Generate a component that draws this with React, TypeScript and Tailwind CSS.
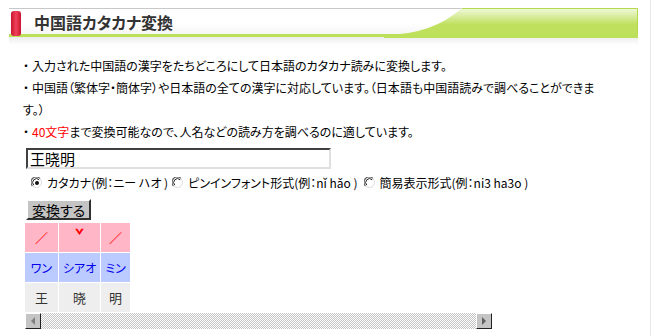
import React from "react";

const jp = "font-['Noto_Sans_CJK_JP',sans-serif] [font-feature-settings:'palt']";

const Radio = ({ checked }: { checked?: boolean }) => (
  <svg width="12" height="12" viewBox="0 0 12 12" className="shrink-0">
    <circle cx="6" cy="6" r="5.5" fill="#ffffff" />
    <path d="M1.5 9 A5 5 0 0 1 9 1.5" fill="none" stroke="#606060" strokeWidth="1.2" />
    <path d="M2.8 8.2 A3.8 3.8 0 0 1 8.2 2.8" fill="none" stroke="#202020" strokeWidth="1" />
    <path d="M9 1.5 A5 5 0 0 1 1.5 9" fill="none" stroke="#dcdcdc" strokeWidth="1" />
    {checked && <circle cx="6" cy="6" r="2" fill="#111111" />}
  </svg>
);

const Dot = () => <span className="inline-block w-[12px] text-center [font-feature-settings:normal]">・</span>;

const Header = () => (
  <div className="relative ml-[9px] w-[629px] h-[29px] border-t border-[#c8c8c8] bg-gradient-to-b from-white via-white to-[#f3f3f3]">
    <svg className="absolute right-0 top-[-1px]" width="254" height="30" viewBox="0 0 254 30">
      <defs>
        <linearGradient id="hdrGreen" x1="0" y1="0" x2="0" y2="1">
          <stop offset="0" stopColor="#f2f9df" />
          <stop offset="0.55" stopColor="#bfe05e" />
          <stop offset="1" stopColor="#bde05a" />
        </linearGradient>
      </defs>
      <path d="M0 27 Q48 27 78 0 H254 V30 H0 Z" fill="url(#hdrGreen)" />
      <path d="M78 0.5 H253.5 V27" fill="none" stroke="#b2da4a" strokeWidth="1" />
    </svg>
    <div className="absolute left-0 right-0 bottom-0 h-[3px] bg-[#bde05a]" />
    <div className="relative flex items-center h-full">
      <div className="ml-[2px] w-[10px] h-[25px] rounded-[3px] bg-gradient-to-r from-[#c8102e] via-[#f0405a] to-[#c8102e]" />
      <span className={`ml-[13px] mb-[2px] text-[16px] font-bold text-[#333333] ${jp}`}>中国語カタカナ変換</span>
    </div>
  </div>
);

export default function App() {
  return (
    <div className={`w-[656px] h-[336px] bg-white overflow-hidden text-[12px] text-black ${jp}`}>
      <div className="w-[651px] h-full border-r border-[#e8e8e8] pt-[8px]">
        <Header />
        <div className="ml-[9px] w-[629px] h-[8px] bg-gradient-to-b from-[#ececec] to-white" />

        <div className="pl-[20px] pt-[10px] leading-[22px] whitespace-nowrap">
          <div><Dot />入力された中国語の漢字をたちどころにして日本語のカタカナ読みに変換します。</div>
          <div><Dot />中国語（繁体字・簡体字）や日本語の全ての漢字に対応しています。（日本語も中国語読みで調べることができま</div>
          <div className="pl-[3px]">す。）</div>
          <div>
            <Dot /><span className="text-[#ff0000]">40文字</span>まで変換可能なので、人名などの読み方を調べるのに適しています。
          </div>
        </div>

        <div className="pl-[26px] mt-[5px]">
          <input
            readOnly
            value="王晓明"
            className={`block w-[305px] h-[21px] px-[2px] text-[15px] leading-[17px] text-black bg-white border-2 border-t-[#404040] border-l-[#404040] border-b-[#e0e0e0] border-r-[#e0e0e0] outline-none ${jp}`}
          />
        </div>

        <div className="flex items-center h-[20px] mt-[4px] pl-[31px] text-[12px]">
          <label className="flex items-center gap-[4px]">
            <Radio checked />
            <span>カタカナ(例：ニー ハオ )</span>
          </label>
          <label className="flex items-center gap-[4px] ml-[4px]">
            <Radio />
            <span>ピンインフォント形式(例：nǐ hǎo )</span>
          </label>
          <label className="flex items-center gap-[4px] ml-[6px]">
            <Radio />
            <span>簡易表示形式(例：ni3 ha3o )</span>
          </label>
        </div>

        <div className="pl-[26px] mt-[6px]">
          <button className="w-[65px] h-[21px] bg-[#c4c4c4] border-2 border-t-white border-l-white border-b-[#303030] border-r-[#303030] text-[14px] leading-[16px] text-black">
            変換する
          </button>
        </div>

        <div className="ml-[25px] mt-[3px] w-[467px]">
          <div className="grid grid-cols-[33px_41px_29px] gap-[1px] text-center">
            <div className="h-[29px] bg-[#ffb6c6] flex items-center justify-center text-[#ff0000] text-[13px]">／</div>
            <div className="h-[29px] bg-[#ffb6c6] flex items-center justify-center text-[#ff0000] text-[15px] font-bold">
              <span className="mb-[4px]">ˇ</span>
            </div>
            <div className="h-[29px] bg-[#ffb6c6] flex items-center justify-center text-[#ff0000] text-[13px]">／</div>

            <div className="h-[29px] bg-[#bbcaff] flex items-center justify-center text-[#0000ee] text-[12px]">ワン</div>
            <div className="h-[29px] bg-[#bbcaff] flex items-center justify-center text-[#0000ee] text-[12px]">シアオ</div>
            <div className="h-[29px] bg-[#bbcaff] flex items-center justify-center text-[#0000ee] text-[12px]">ミン</div>

            <div className="h-[29px] bg-[#eeeeee] flex items-center justify-center text-[#333333] text-[13px]">王</div>
            <div className="h-[29px] bg-[#eeeeee] flex items-center justify-center text-[#333333] text-[13px]">晓</div>
            <div className="h-[29px] bg-[#eeeeee] flex items-center justify-center text-[#333333] text-[13px]">明</div>
          </div>

          <div className="flex h-[16px] mt-[1px]">
            <div className="w-[16px] h-[16px] bg-[#c4c4c4] border border-t-white border-l-white border-b-[#202020] border-r-[#202020] flex items-center justify-center">
              <svg width="6" height="8" viewBox="0 0 6 8">
                <path d="M5 0 L1 4 L5 8 Z" fill="#808080" />
              </svg>
            </div>
            <div className="flex-1 bg-[repeating-conic-gradient(#c4c4c4_0%_25%,#ffffff_0%_50%)] bg-[length:2px_2px]" />
            <div className="w-[16px] h-[16px] bg-[#c4c4c4] border border-t-white border-l-white border-b-[#202020] border-r-[#202020] flex items-center justify-center">
              <svg width="6" height="8" viewBox="0 0 6 8">
                <path d="M1 0 L5 4 L1 8 Z" fill="#606060" />
              </svg>
            </div>
          </div>
        </div>
      </div>
    </div>
  );
}
